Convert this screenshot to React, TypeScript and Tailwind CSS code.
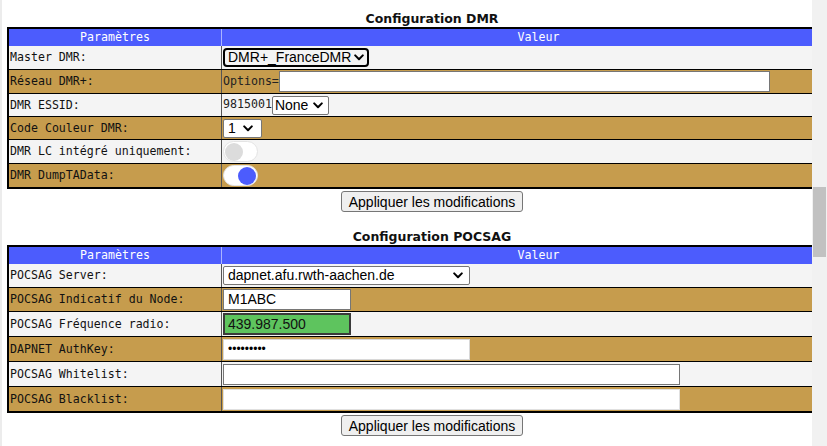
import type { ReactNode } from "react";

const mono = "font-['DejaVu_Sans_Mono',monospace] text-[11.6px]";
const sans = "font-['Liberation_Sans',Arial,sans-serif] text-[14px]";

function Chevron() {
  return (
    <svg width="10" height="7" viewBox="0 0 10 7" className="shrink-0">
      <path d="M1.2 1.4 L5 5.2 L8.8 1.4" fill="none" stroke="#000" strokeWidth="2" strokeLinecap="round" strokeLinejoin="round" />
    </svg>
  );
}

interface RowProps {
  readonly label: string;
  readonly gold?: boolean;
  readonly h: string;
  readonly last?: boolean;
  readonly children?: ReactNode;
}

function Row({ label, gold, h, last, children }: RowProps) {
  return (
    <div
      className={`flex box-border ${h} ${gold ? "bg-[#c69c4d]" : "bg-[#f4f4f4]"} ${
        last ? "" : "border-b border-black"
      }`}
    >
      <div className={`w-[212px] shrink-0 flex items-center pl-[1px] pt-[1px] text-[#111] ${mono}`}>{label}</div>
      <div className="flex-1 flex items-center border-l border-[#555] pl-[1px]">{children}</div>
    </div>
  );
}

function Header() {
  return (
    <div className={`flex h-[17px] bg-[#4c5cfd] text-white ${mono}`}>
      <div className="w-[212px] shrink-0 flex items-center justify-center">Paramètres</div>
      <div className="flex-1 flex items-center justify-center border-l border-[#aab4ff]">Valeur</div>
    </div>
  );
}

function Toggle({ on }: { readonly on: boolean }) {
  return (
    <div
      className={`w-[35px] h-[21px] rounded-full bg-white border border-[#e4e4e4] flex items-center px-[1px] ${
        on ? "justify-end" : "justify-start"
      }`}
    >
      <div className={`w-[18px] h-[18px] rounded-full ${on ? "bg-[#4c5cfd]" : "bg-[#dcdcdc]"}`} />
    </div>
  );
}

function Apply() {
  return (
    <div className="flex justify-center mt-[2px]">
      <button
        className={`h-[21px] px-[7px] bg-[#efefef] border border-[#767676] rounded-[3px] text-black leading-none ${sans}`}
      >
        Appliquer les modifications
      </button>
    </div>
  );
}

const inputBase = `h-[21px] bg-white border border-[#767676] px-[4px] text-black outline-none ${sans}`;
const heading = "h-[17px] leading-[17px] text-center font-bold text-[12.5px] text-[#111] font-['DejaVu_Sans',Verdana,sans-serif]";

export default function App() {
  return (
    <div className="flex w-[827px] h-[446px] overflow-hidden bg-white">
      <div className="w-[2px] shrink-0 bg-[#ececec]" />
      <div className="flex-1 overflow-hidden">
        <div className="w-[850px] ml-[5px] pt-[10px]">
          <h2 className={heading}>Configuration DMR</h2>
          <div className="border-2 border-black">
            <Header />
            <Row label="Master DMR:" h="h-[24px]">
              <div className={`w-[146px] h-[19px] border-2 border-black rounded-[4px] flex items-center justify-between pl-[3px] pr-[3px] text-black ${sans}`}>
                <span>DMR+_FranceDMR</span>
                <Chevron />
              </div>
            </Row>
            <Row label="Réseau DMR+:" gold h="h-[24px]">
              <span className={`text-[#222] ${mono}`}>Options=</span>
              <input readOnly value="" className={`w-[491px] ${inputBase}`} />
            </Row>
            <Row label="DMR ESSID:" h="h-[23px]">
              <span className={`text-[#222] ${mono}`}>9815001</span>
              <div className={`w-[57px] h-[19px] border border-[#767676] rounded-[2px] bg-white flex items-center justify-between pl-[2px] pr-[5px] text-black ${sans}`}>
                <span>None</span>
                <Chevron />
              </div>
            </Row>
            <Row label="Code Couleur DMR:" gold h="h-[23px]">
              <div className={`w-[39px] h-[19px] border border-[#767676] rounded-[2px] bg-white flex items-center justify-between pl-[4px] pr-[8px] text-black ${sans}`}>
                <span>1</span>
                <Chevron />
              </div>
            </Row>
            <Row label="DMR LC intégré uniquement:" h="h-[24px]">
              <Toggle on={false} />
            </Row>
            <Row label="DMR DumpTAData:" gold h="h-[23px]" last>
              <Toggle on />
            </Row>
          </div>
          <Apply />

          <h2 className={`mt-[16px] ${heading}`}>Configuration POCSAG</h2>
          <div className="border-2 border-black">
            <Header />
            <Row label="POCSAG Server:" h="h-[24px]">
              <div className={`w-[247px] h-[19px] border border-[#767676] rounded-[2px] bg-white flex items-center justify-between pl-[4px] pr-[6px] text-black ${sans}`}>
                <span>dapnet.afu.rwth-aachen.de</span>
                <Chevron />
              </div>
            </Row>
            <Row label="POCSAG Indicatif du Node:" gold h="h-[24px]">
              <input readOnly value="M1ABC" className={`w-[128px] ${inputBase}`} />
            </Row>
            <Row label="POCSAG Fréquence radio:" h="h-[25px]">
              <input
                readOnly
                value="439.987.500"
                className={`w-[128px] h-[22px] bg-[#5ec45e] border-2 border-[#3a3a3a] px-[3px] text-[#111] outline-none ${sans}`}
              />
            </Row>
            <Row label="DAPNET AuthKey:" gold h="h-[25px]">
              <input
                readOnly
                type="password"
                value="123456789"
                className={`w-[247px] h-[21px] bg-white border border-[#d8d8d8] px-[4px] text-black outline-none font-['Liberation_Sans',Arial,sans-serif] text-[12px]`}
              />
            </Row>
            <Row label="POCSAG Whitelist:" h="h-[25px]">
              <input readOnly value="" className={`w-[457px] ${inputBase}`} />
            </Row>
            <Row label="POCSAG Blacklist:" gold h="h-[24px]" last>
              <input readOnly value="" className={`w-[457px] ${inputBase} border-[#e0e0e0]`} />
            </Row>
          </div>
          <Apply />
        </div>
      </div>
      <div className="w-[15px] shrink-0 bg-[#f1f1f1] pt-[187px] pl-[1px]">
        <div className="w-[13px] h-[70px] bg-[#c1c1c1]" />
      </div>
    </div>
  );
}
